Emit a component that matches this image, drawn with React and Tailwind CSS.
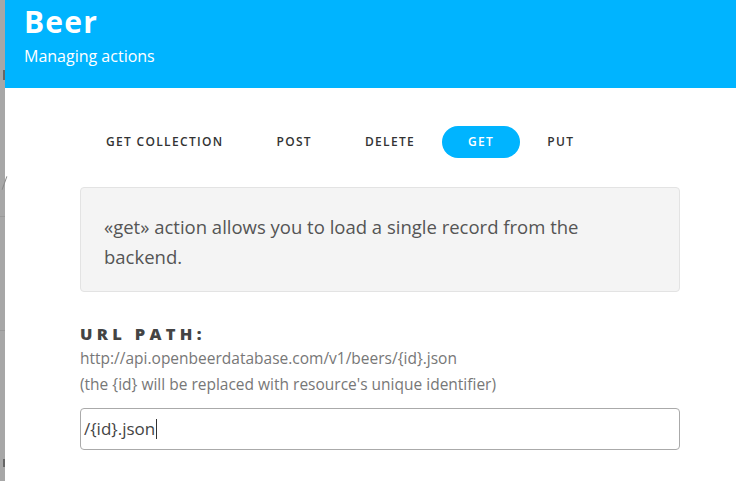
import React from 'react';

const tabs = ['GET COLLECTION', 'POST', 'DELETE', 'GET', 'PUT'];

const App = () => {
  const active = 'GET';

  return (
    <div className="flex h-[481px] w-[736px] overflow-hidden font-['Open_Sans',sans-serif]">
      {/* dimmed page behind the modal */}
      <div className="flex w-[5px] shrink-0 flex-col items-end bg-[#a7a7a7]">
        <div className="mt-[70px] h-[10px] w-[2px] bg-[#666]" />
        <div className="mt-[96px] h-[14px] w-px rotate-[20deg] bg-[#888]" />
        <div className="mt-[26px] h-px w-full bg-[#999]" />
        <div className="mt-[113px] h-px w-full bg-[#999]" />
        <div className="mt-[128px] h-[8px] w-[2px] bg-[#666]" />
      </div>

      <div className="flex-1 bg-white">
        <div className="h-[88px] bg-[#00b4ff] px-[19px] pt-[3px] text-white">
          <h1 className="text-[30px] font-bold leading-[38px] tracking-[0.04em]">Beer</h1>
          <p className="mt-[5px] text-[16px] leading-[20px]">Managing actions</p>
        </div>

        <div className="pl-[75px] pr-[56px] pt-[38px]">
          <div className="flex gap-[1px]">
            {tabs.map((tab) => (
              <div
                key={tab}
                className={`flex h-[32px] items-center rounded-full px-[26px] text-[12px] font-semibold tracking-[0.11em] ${
                  tab === active ? 'bg-[#00b4ff] text-white' : 'text-[#333]'
                }`}
              >
                {tab}
              </div>
            ))}
          </div>

          <div className="mt-[29px] rounded-[4px] border border-[#e3e3e3] bg-[#f4f4f4] px-[23px] pb-[19px] pt-[24px] text-[18.5px] leading-[30px] text-[#555]">
            «get» action allows you to load a single record from the backend.
          </div>

          <div className="mt-[31px]">
            <div className="text-[16.5px] font-extrabold leading-[22px] tracking-[0.26em] text-[#444]">URL PATH:</div>
            <div className="text-[15.5px] leading-[26px] text-[#777]">
              http://api.openbeerdatabase.com/v1/beers/{'{id}'}.json
            </div>
            <div className="text-[15.5px] leading-[26px] text-[#777]">
              (the {'{id}'} will be replaced with resource's unique identifier)
            </div>
          </div>

          <div className="mt-[11px] flex h-[42px] items-center rounded-[4px] border border-[#aaa] px-[3px] text-[17px] text-[#444]">
            <span>/{'{id}'}.json</span>
            <span className="ml-px h-[20px] w-px bg-[#333]" />
          </div>
        </div>
      </div>
    </div>
  );
};

export default App;
